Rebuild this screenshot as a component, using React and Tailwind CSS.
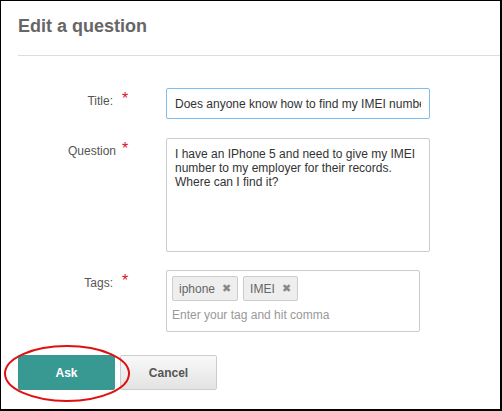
import React from "react";

const font = { fontFamily: '"Liberation Sans", Arial, sans-serif' };

function Label({ text, pad = "" }) {
  return (
    <div className="flex w-[149px] shrink-0">
      <span className={`w-[99px] text-right text-[12px] leading-[15px] text-[#555] ${pad}`}>{text}</span>
      <span className="ml-[6px] text-[16px] leading-[15px] text-[#e0101a] -mt-[3px]">*</span>
    </div>
  );
}

function Tag({ label }) {
  return (
    <span className="flex h-[25px] items-center gap-[7px] rounded-[2px] border border-[#ccc] bg-[#eee] pl-[6px] pr-[6px] text-[12px] text-[#666]">
      {label}
      <span className="text-[11px] text-[#888]">✖</span>
    </span>
  );
}

export default function App() {
  return (
    <div
      style={font}
      className="relative h-[411px] w-[502px] overflow-hidden border-l border-t border-r-2 border-b-2 border-black bg-white"
    >
      <div className="pl-[16px] pt-[15px]">
        <h1 className="pl-[1px] text-[18px] font-bold leading-[21px] text-[#666]">Edit a question</h1>
        <div className="ml-[1px] mt-[18px] h-px bg-[#ddd]" />

        {/* Title */}
        <div className="mt-[32px] flex items-start">
          <div className="pt-[6px]">
            <Label text="Title:" pad="pr-[3px]" />
          </div>
          <input
            readOnly
            value="Does anyone know how to find my IMEI number on my iPhone 5?"
            className="h-[31px] w-[264px] rounded-[2px] border border-[#7dbdf0] px-[8px] text-[12px] text-[#333] outline-none"
            style={font}
          />
        </div>

        {/* Question */}
        <div className="mt-[19px] flex items-start">
          <div className="pt-[6px]">
            <Label text="Question" />
          </div>
          <div className="h-[114px] w-[264px] rounded-[2px] border border-[#ccc] px-[8px] pt-[8px] text-[12px] leading-[14px] text-[#333]">
            I have an IPhone 5 and need to give my IMEI
            <br />
            number to my employer for their records.
            <br />
            Where can I find it?
          </div>
        </div>

        {/* Tags */}
        <div className="mt-[18px] flex items-start">
          <div className="pt-[6px]">
            <Label text="Tags:" pad="pr-[3px]" />
          </div>
          <div className="h-[62px] w-[254px] rounded-[2px] border border-[#ccc] px-[5px] pt-[5px]">
            <div className="flex gap-[5px]">
              <Tag label="iphone" />
              <Tag label="IMEI" />
            </div>
            <div className="mt-[7px] text-[12px] leading-[15px] text-[#999]">Enter your tag and hit comma</div>
          </div>
        </div>

        {/* Buttons */}
        <div className="ml-[1px] mt-[23px] flex gap-[5px]">
          <button
            style={font}
            className="h-[35px] w-[97px] rounded-[2px] bg-[#379992] text-[12px] font-bold text-white"
          >
            Ask
          </button>
          <button
            style={font}
            className="h-[35px] w-[97px] rounded-[2px] border border-[#ccc] bg-linear-to-b from-[#f9f9f9] to-[#e3e3e3] text-[12px] font-bold text-[#555]"
          >
            Cancel
          </button>
        </div>
      </div>

      {/* red highlight */}
      <svg className="absolute left-[2px] top-[343px]" width="128" height="59" viewBox="0 0 128 59">
        <ellipse cx="64" cy="29.5" rx="62" ry="27.5" fill="none" stroke="#e01010" strokeWidth="2" />
      </svg>
    </div>
  );
}
